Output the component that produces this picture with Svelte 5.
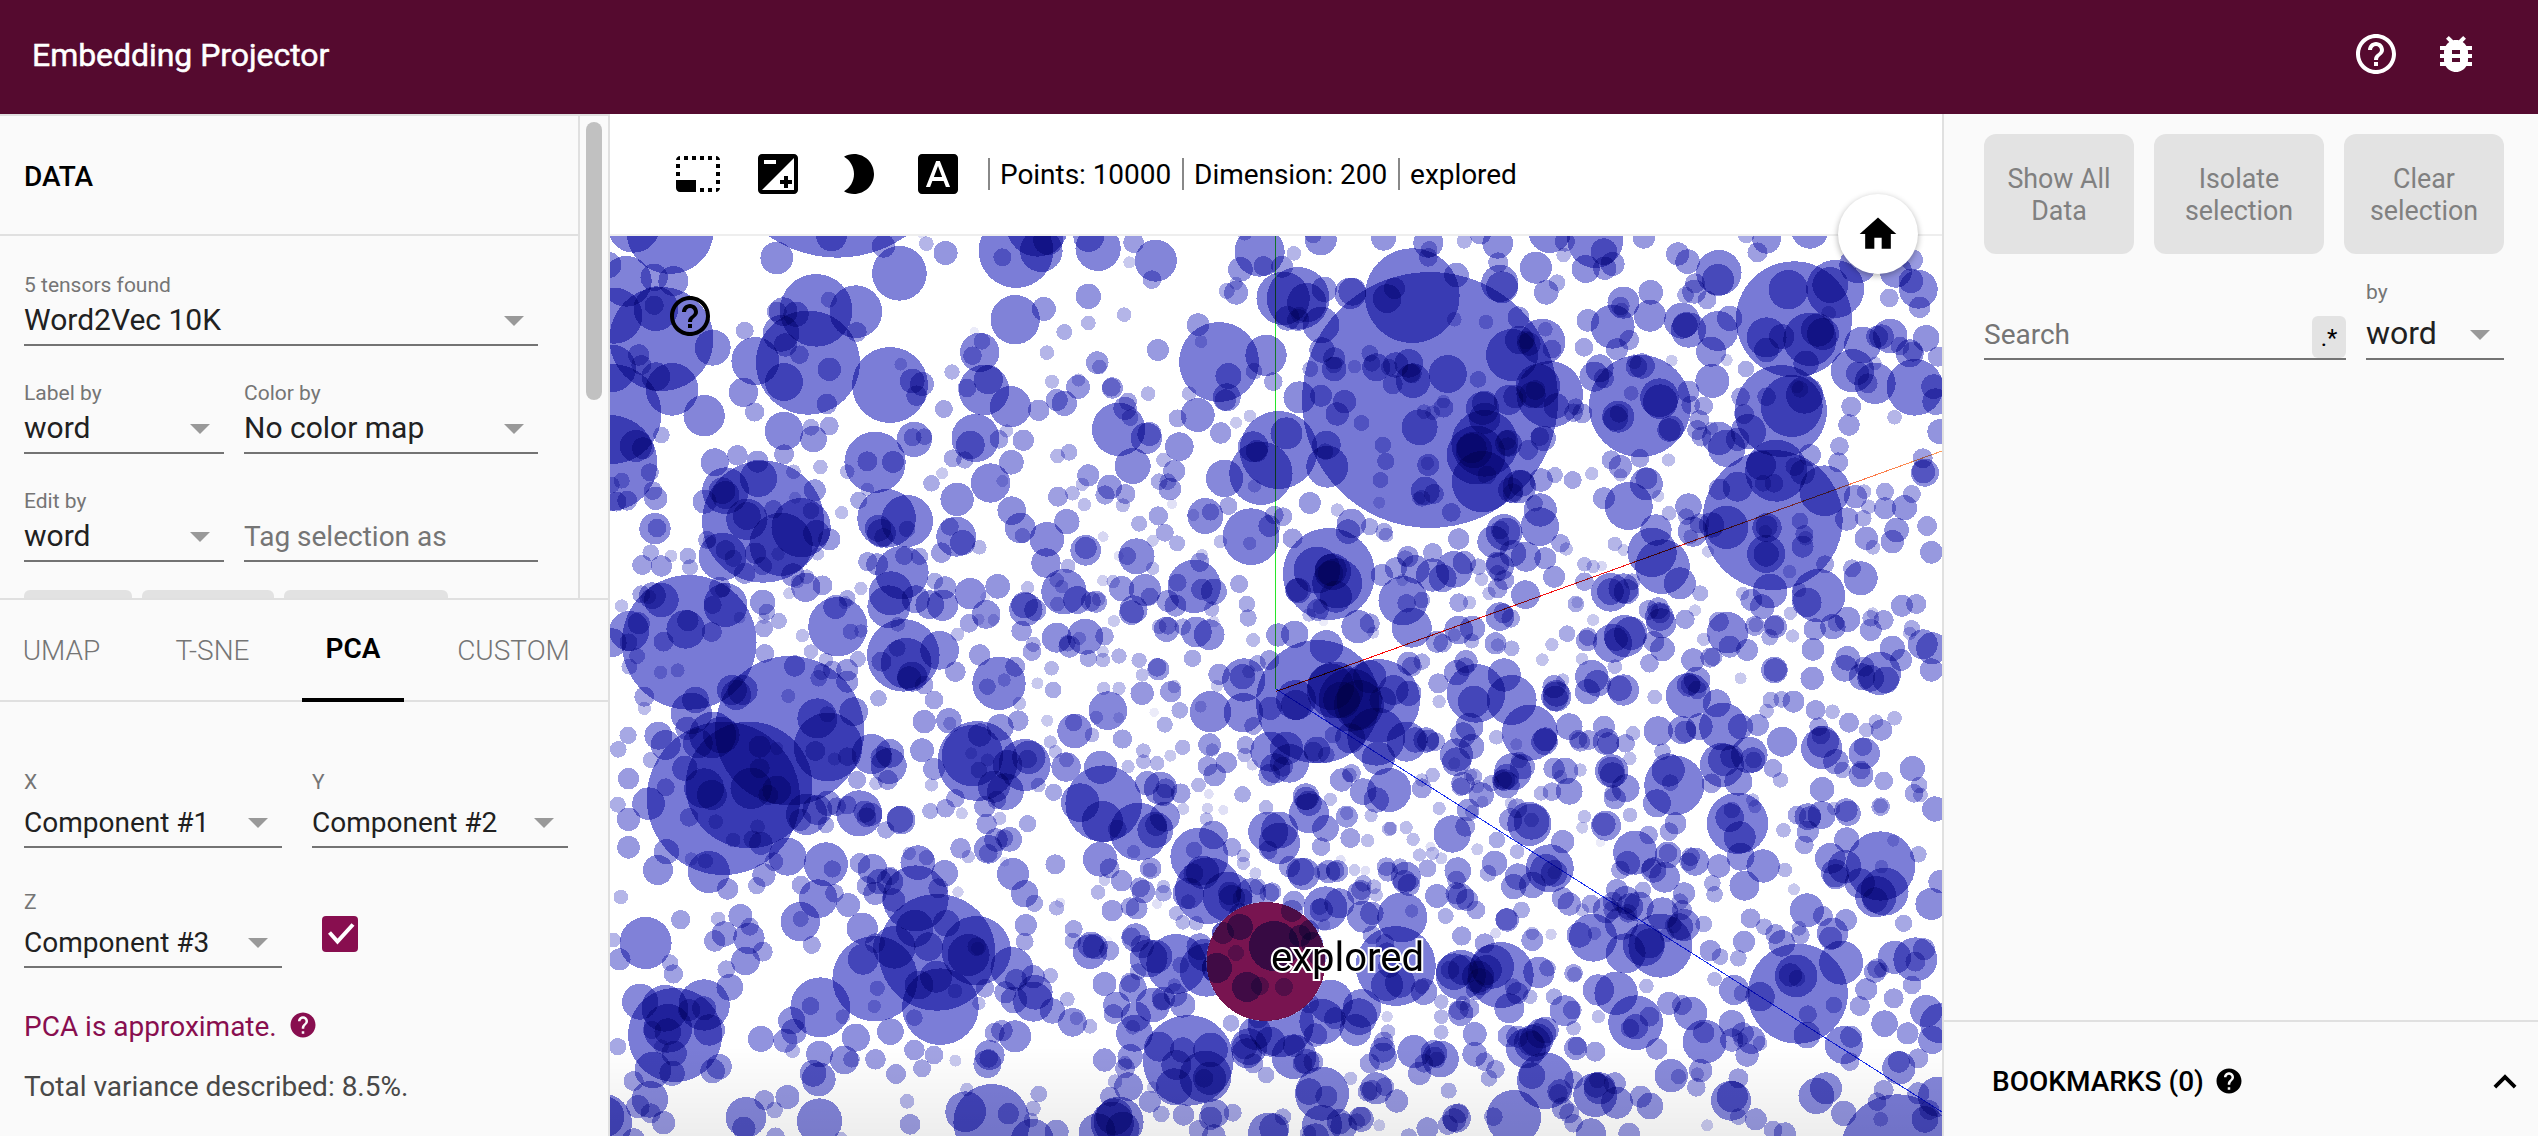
<script>
  // Projected points, grouped by scene quadrant. Each entry is "x y size" in quadrant units.
  const quadrants = [
    {
      x: 608, y: 230, kx: 0.4273,
      data: `145 1 131,60 -10 78,537 -278 361,395 84 49,523 18 46,645 48 35,682 130 82,745 41 22,735 10 15,790 69 36,955 62 112,1005 -13 93,1014 62 64,923 82 27,1030 30 45,1147 55 68,1125 20 46,1220 97 18,1230 38 31,1282 92 63,1273 149 28,1525 65 75,1534 108 30,1480 118 37,1470 188 36,1448 183 24,1470 160 20,1490 10 22,0 105 40,43 154 76,108 142 41,153 153 45,112 236 67,15 257 84,108 226 29,125 327 156,245 353 54,320 302 27,72 375 32,78 405 30,10 415 71,112 440 43,150 478 79,225 557 62,8 552 150,3 699 144,65 648 48,82 655 33,125 615 25,98 727 27,32 752 24,8 765 25,112 805 35,20 815 30,45 812 30,105 782 28,110 896 47,115 894 28,100 968 25,148 978 19,187 978 25,80 1005 30,125 1008 32,192 1012 24,
487 241 109,517 209 24,580 245 79,582 306 30,410 245 43,395 245 30,440 253 38,468 398 156,345 393 72,405 310 55,415 345 35,448 374 28,518 418 35,412 456 57,512 522 31,317 487 44,343 546 29,660 465 114,685 403 19,712 453 37,735 462 36,722 497 31,805 426 23,786 537 27,412 603 58,475 592 25,518 588 28,481 627 40,625 697 92,607 694 30,667 696 33,717 628 53,713 622 27,740 620 25,870 367 59,857 305 14,875 334 25,853 377 28,880 480 76,890 449 44,840 474 28,942 530 62,953 269 74,1020 237 36,1124 199 38,1208 254 22,1124 279 22,1068 306 24,1027 368 22,1287 360 33,1145 398 34,1150 411 22,1100 471 36,1101 450 20,1039 455 21,1180 474 32,1178 472 28,1264 491 22,1050 510 33,1068 520 38,1008 541 32,1217 515 27,1210 535 35,1222 563 25,1195 598 80,1260 625 47,1267 612 36,1228 708 54,1337 650 43,1381 284 34,1430 396 120,1388 335 19,1540 376 62,1452 438 39,1512 424 25,1448 502 42,1445 510 32,1360 491 22,1380 555 51,1333 565 27,1434 609 32,1470 578 18,1502 558 19,1557 455 28,1580 205 80,1528 730 95,1510 650 46,1518 663 33,1443 745 56,1513 768 20,1398 858 54,1410 846 26,1370 855 18,1452 828 27,1505 920 85,1548 888 33,1502 940 20,1433 935 20,
860 624 72,848 645 43,915 628 28,933 603 20,972 631 32,944 697 37,807 685 27,835 690 26,782 730 18,757 760 25,895 759 59,923 753 18,817 808 50,560 725 22,497 711 22,587 811 26,607 778 20,547 848 20,1052 678 22,1079 667 25,1124 736 33,1110 763 20,1300 690 22,1325 723 33,1290 755 25,1310 755 25,1315 777 34,1174 771 37,1163 795 29,1211 792 30,1087 790 22,1053 800 30,1115 824 20,1205 826 21,1320 822 15,945 842 43,1288 858 29,1243 881 24,1303 908 27,1275 932 18,1332 940 24,1074 875 38,965 894 46,970 917 23,1159 920 16,1118 961 46,1118 954 33,1027 928 52,1025 999 44,1077 1008 22,1237 979 54,1215 978 27,1195 978 15,1275 1015 20,250 697 42,303 676 31,350 695 33,412 673 30,434 725 22,484 781 33,363 875 183,352 745 56,275 782 70,275 795 42,267 782 40,325 868 62,325 858 42,387 838 28,438 803 18,452 893 89,405 943 95,475 842 25,488 910 40,518 928 33,226 815 36,268 980 72,232 930 27,237 935 20,275 960 30,293 985 26,345 970 32,362 1008 28,320 1030 32,398 972 20,433 1035 35,490 972 20,652 865 88,700 873 78,632 895 40,640 910 43,645 922 28,700 897 25,815 920 60,800 890 27,830 938 38,780 968 31,869 952 22,688 1028 80,693 978 27,729 979 26,608 995 29,630 1003 33,662 1090 66,657 1130 64,592 1075 20,720 1108 42,753 1124 43,783 1126 47,789 1073 34,765 1053 25,848 1091 47,912 1069 37,885 1153 43,868 1168 17,902 1170 18,845 1180 28,883 1100 15,982 1073 20,978 1138 50,975 1125 40,1000 1140 33,1067 1085 68,1050 1050 22,1062 1070 20,1098 1110 42,1130 1115 30,1142 1115 33,1052 1122 22,1158 1052 17,1182 1055 20,1202 1076 38,1257 1080 48,1268 1100 27,1148 1108 20,1225 1148 37,1230 1138 42,1184 1173 18,1372 1069 80,1333 1058 27,1390 1078 32,1418 1085 39,1385 997 29,1390 975 18,1310 1113 33,1328 1127 33,1413 1137 23,1477 1062 27,1495 1122 25,1498 1164 26,1418 1175 17,1510 1230 21,1307 1198 38,1310 1187 27,1290 1190 22,1377 1206 46,1407 1214 46,1345 1190 25,1050 1223 45,1117 1220 54,1162 1219 28,1075 1240 25,1080 1250 33,1103 1225 20,968 1203 31,995 1243 23,992 1265 28,1124 1285 26,1158 1290 22,1196 1278 23,1243 1291 23,1288 1318 33,1285 1312 28,1368 1285 26,1250 1335 20,1038 1315 22,1158 1265 18,1430 1333 32,1485 1340 38,1520 1300 25,1548 1290 30,1500 1325 20,
463 1072 44,465 1040 22,502 1066 30,424 1090 18,443 1055 20,362 1117 38,372 1146 25,400 1173 24,365 1165 17,365 1195 27,367 1270 28,308 1163 18,32 1128 20,538 1190 89,532 1131 36,560 1105 25,555 1118 20,568 1205 24,592 1203 20,455 1217 20,818 1213 20,190 1237 202,125 1110 52,104 1097 40,95 1100 22,78 1093 27,262 1072 32,268 1080 22,275 1125 66,245 1125 27,182 1198 58,187 1172 32,130 1235 30,243 1206 30,50 1203 60,72 1180 33,48 1237 27,10 1238 43,68 1278 24,50 1310 24,123 1327 20,163 1321 21,691 1276 109,698 1300 76,776 1261 58,677 1255 25,640 1295 30,678 1183 22,712 1340 45,813 1325 31,870 1275 32,475 1265 22,510 1290 22,585 1287 24,560 1320 33,437 1308 32,500 1325 25,525 1320 28,915 1360 80,953 1310 30,927 1350 20`
    },
    {
      x: 1270, y: 230, kx: 0.4337,
      data: `117 28 48,100 15 25,55 70 22,28 110 33,262 25 37,365 38 45,367 58 25,365 82 28,448 33 23,485 10 33,430 135 37,525 40 46,526 97 30,530 160 56,535 172 48,613 113 48,637 187 37,662 158 25,677 75 22,645 5 64,750 30 84,770 65 40,790 102 36,728 117 42,772 115 35,680 35 30,862 22 34,940 72 35,963 95 37,1035 128 68,1033 150 48,980 160 30,978 185 36,958 195 25,1008 210 28,1145 28 43,1124 67 30,1098 15 25,1245 0 56,1480 90 33,1443 125 48,1495 178 58,1478 153 37,1428 204 28,1498 232 32,1355 105 55,1208 268 174,1195 179 59,1303 177 87,1292 165 54,1288 250 22,1245 328 80,1275 312 48,1263 300 50,1145 322 60,1180 320 38,1145 360 37,1236 400 38,1060 265 38,328 197 142,287 175 32,270 206 43,185 190 47,190 185 42,125 178 38,65 205 94,85 218 59,40 265 37,65 270 33,68 255 25,118 285 55,369 510 384,425 268 22,498 276 22,573 262 33,635 298 22,628 335 69,650 357 28,558 375 78,575 330 43,597 342 35,590 330 28,645 493 100,618 468 66,612 480 30,605 495 40,660 528 38,120 360 38,148 385 33,148 417 37,147 405 25,230 370 25,235 400 25,245 412 42,195 410 20,290 405 38,275 412 25,320 400 43,325 430 28,330 452 52,327 430 30,283 463 30,93 417 24,410 432 57,480 448 25,400 515 20,400 533 30,68 502 48,118 497 33,172 515 35,155 552 35,211 579 24,260 645 25,267 694 26,255 750 24,252 818 18,345 592 54,355 545 22,375 548 22,365 705 33,363 700 20,358 783 43,378 792 30,350 805 25,343 805 20,418 847 28,130 645 43,132 710 63,127 665 25,20 660 117,38 610 48,
490 535 50,495 565 47,495 520 38,495 640 100,470 660 55,465 655 45,490 755 92,475 675 88,550 640 40,545 630 30,548 650 28,595 660 30,565 500 35,550 510 45,630 625 38,622 620 28,500 735 28,575 770 50,580 760 40,555 780 38,625 750 35,560 790 30,700 548 28,720 550 30,705 530 25,733 271 34,724 352 28,790 290 66,815 218 48,810 240 22,878 187 37,876 257 48,808 228 28,828 330 30,800 358 33,760 415 42,748 440 45,770 445 30,853 528 153,845 410 32,858 408 38,840 395 22,898 503 58,900 515 52,833 490 22,803 560 48,797 565 37,805 550 28,925 595 38,920 600 35,965 485 33,970 525 28,1000 528 28,853 685 28,787 690 29,919 690 20,742 731 20,698 750 27,657 735 24,808 710 35,808 735 20,950 272 54,965 300 53,957 285 38,1033 303 60,1017 365 45,1020 453 51,1053 390 18,926 392 18,1097 417 25,1178 543 138,1203 528 93,1233 495 56,1145 500 28,1222 478 25,1215 470 20,1085 500 28,1103 605 53,1093 552 30,1159 870 210,1167 722 93,1132 705 45,1228 727 37,1210 710 28,1279 782 76,1162 760 28,1137 760 25,1078 770 45,1036 778 32,1053 892 65,1018 885 38,1146 893 44,1142 905 20,1144 972 57,1144 972 38,1145 890 33,1222 873 25,1232 912 27,1228 950 33,1235 925 22,1198 1025 20,1280 1003 27,1153 1083 52,1265 1097 80,1238 1117 44,1220 1080 22,1362 1045 51,1342 1015 27,1110 1110 33,1135 1130 37,1090 1090 20,1053 655 56,1035 625 50,1078 628 35,1313 649 28,1310 697 30,1245 675 33,1335 585 32,1340 530 30,1440 562 22,1487 472 85,1395 460 62,1378 460 30,1343 422 65,1355 430 35,1366 345 55,1410 320 37,1430 318 52,1400 320 33,1395 400 20,1513 325 40,1475 370 42,1482 365 30,1453 348 28,1530 470 37,1535 515 40,1540 380 30,1545 605 38,1510 728 42,1507 725 35,1505 685 30,1418 785 27,1480 792 27,1463 833 38,1445 900 37,1418 835 33,1435 935 35,1375 925 35,1390 952 22,1525 967 34,1515 888 30,1330 867 35,1350 800 35,1370 785 22,1368 865 25,1380 830 22,990 570 30,985 600 30,995 620 30,1018 595 20,
827 828 72,770 805 33,868 762 49,868 745 33,895 798 18,920 850 22,890 900 47,881 967 74,905 1010 82,945 1060 48,965 830 40,960 860 25,975 905 45,990 880 30,970 920 22,1010 965 18,795 942 22,815 960 18,725 1003 22,765 1008 16,745 1010 20,725 1055 28,785 1087 58,785 1085 40,815 1075 45,822 1085 38,835 1055 25,705 1122 25,708 1118 17,655 1040 33,92 819 33,155 840 20,188 880 44,180 905 37,230 890 26,263 905 26,268 915 22,30 860 28,10 855 28,52 925 30,136 1032 138,108 1020 70,145 1025 55,140 1020 48,140 1030 38,155 1060 75,152 1100 48,65 1082 38,62 1080 35,110 1140 33,90 1155 20,115 1130 22,123 1175 14,435 927 32,375 968 29,318 980 32,312 985 24,335 1018 43,290 1015 33,258 1035 33,305 1050 18,307 1112 74,315 1120 28,350 1110 25,327 1193 60,425 1018 55,448 998 35,398 1045 42,375 1035 50,435 1118 28,460 1118 20,515 935 48,540 907 55,545 905 42,530 900 28,623 840 50,622 890 58,610 820 25,590 980 45,530 1010 42,525 1000 35,525 1030 25,560 970 40,635 985 33,670 940 28,683 957 20,480 1010 25,488 1048 20,540 1050 30,525 1075 30,505 1090 20,589 1094 43,530 1160 43,538 1150 30,57 1213 41,18 1215 35,203 1190 50,230 1180 30,238 1208 18,130 1250 50,385 1235 33,398 1240 28,435 1200 43,467 1195 38,465 1233 23,425 1215 20,520 1240 33,525 1245 20,557 1255 24,555 1165 28,628 1289 19,650 1244 20,685 1211 25,720 1287 19,730 1232 32,733 1220 28,818 1218 63,798 1228 35,832 1210 50,790 1240 58,745 1170 18,898 1160 43,900 1150 30,895 1135 33,873 1140 30,902 1180 45,885 1235 32,905 1257 37,957 1168 29,980 1141 18,992 1090 24,875 1300 28,742 1340 50,795 1310 22,540 1335 50,452 1295 35,450 1310 28,430 1328 38,320 1300 35,327 1310 30,350 1295 25,230 1340 50,1055 1208 62,1035 1175 30,1060 1250 33,1100 1260 33,1015 1283 30,1022 1280 28,975 1290 35,1000 1228 20,1165 1190 35,1163 1187 30,1118 1188 30,1120 1185 22,1152 1222 25,1205 1218 20,1200 1150 20,1256 1198 33,1298 1190 38,1305 1180 25,1332 1168 38,1252 1258 34,1250 1345 35,1163 1320 40,1165 1320 35,1385 1200 33,1390 1150 18,1385 1165 25,1415 1170 30,1457 1127 33,1490 1122 30,1505 1243 45,1527 1255 48,1475 1210 20,1435 1255 38,1480 1195 25,1332 1285 37,1325 1315 40,1405 1330 65,1385 1345 40,1370 1310 30,1365 1340 40,1420 1350 40,1455 1290 33,1525 1320 35,985 1350 40,965 1365 35,1085 1345 18,675 1350 20`
    },
    {
      x: 608, y: 680, kx: 0.4273,
      data: `425 152 224,270 355 230,330 315 190,225 325 60,243 345 45,335 325 62,245 165 70,265 165 55,195 100 62,185 145 35,205 60 40,180 265 38,210 190 45,118 167 42,135 195 45,85 50 30,85 85 20,47 166 26,24 208 25,100 240 24,48 296 32,95 371 49,23 374 24,48 418 35,48 502 34,135 322 27,190 412 28,252 425 22,293 480 22,338 478 27,350 440 22,358 490 35,137 515 38,117 570 45,236 576 63,195 537 20,228 543 23,280 627 32,30 651 22,420 530 57,365 585 35,388 545 28,348 617 26,490 115 60,515 201 103,513 103 24,485 213 30,530 237 20,560 230 28,575 95 43,422 48 21,300 45 45,315 30 45,290 30 45,493 -5 25,560 5 33,355 200 33,395 205 20,395 330 43,375 345 30,355 265 30,633 55 25,617 222 60,657 258 54,660 220 43,640 232 33,583 300 27,627 310 20,655 300 30,465 403 62,490 390 45,515 370 38,510 435 25,535 380 28,450 420 33,588 400 69,560 375 28,600 395 33,615 403 35,605 412 30,686 420 43,683 418 40,650 450 26,740 125 35,798 122 38,735 211 36,763 267 33,757 315 20,705 -5 36,740 15 28,763 60 28,888 20 25,963 70 20,960 122 31,918 142 40,865 243 120,853 227 92,870 165 35,800 130 20,935 255 45,975 255 78,985 232 50,982 237 28,930 335 55,903 320 48,868 270 25,850 220 18,888 240 20,813 355 28,790 385 28,754 393 24,828 400 18,882 380 32,910 360 28,886 432 31,917 415 20,982 431 26,
1028 122 18,1092 153 52,1090 128 26,1133 165 22,1035 186 20,1170 92 58,1143 112 20,1195 113 16,1204 177 29,1160 25 20,1196 25 20,1042 30 25,1005 10 18,1250 40 35,1317 35 32,1325 20 20,1278 97 14,1303 134 24,1338 91 25,1410 95 62,1387 80 18,1425 18 18,1488 0 65,1487 98 59,1550 85 35,1510 138 27,1253 212 22,1217 260 20,1316 227 18,1345 202 23,1408 194 34,1414 210 20,1492 195 27,1490 225 22,1447 248 32,1403 258 30,1420 285 34,1508 255 17,1550 215 60,1548 285 33,1072 261 44,1073 240 22,1153 262 50,1160 371 115,1105 368 58,1047 215 20,1157 425 62,1242 455 87,1230 515 20,1262 310 37,1293 325 50,1305 325 30,1340 340 30,1300 345 33,1283 435 33,1281 450 54,1192 447 28,1303 410 45,1253 245 22,1285 250 22,1043 337 26,1007 315 22,1382 315 22,1406 342 15,1346 387 18,1403 385 17,1440 390 15,1485 343 25,1400 417 20,1540 382 22,1152 538 52,1174 565 30,1202 602 32,1384 530 87,1372 510 25,1417 465 43,1460 502 28,1487 527 20,1487 550 20,1405 632 100,1392 577 50,1370 580 30,1358 640 47,1358 665 22,1450 650 75,1455 640 35,1485 655 30,1460 655 40,1480 705 35,1515 580 18,1520 620 25,1505 640 45,1548 640 30,1545 455 60,1545 510 28,
825 505 31,843 530 20,890 508 43,908 480 35,940 478 37,927 475 27,890 520 28,948 582 48,928 545 15,1047 553 30,975 641 41,998 670 26,1050 684 23,1058 668 15,1147 637 22,510 553 66,525 567 26,492 656 58,452 615 28,530 640 28,562 675 36,590 550 31,619 567 45,605 618 30,625 640 35,635 605 38,660 588 28,725 548 52,745 533 23,705 520 20,788 580 40,720 655 99,773 625 30,668 660 35,660 605 40,819 636 17,595 745 47,450 725 59,451 717 24,477 795 27,770 817 175,718 745 56,792 730 40,625 896 128,597 838 46,625 790 30,670 802 64,750 800 43,862 812 104,844 825 63,865 805 20,863 800 28,728 915 43,778 980 115,768 890 48,812 933 22,717 1013 25,497 982 90,474 978 27,630 925 23,623 979 20,580 1073 42,550 1010 22,661 1055 40,945 865 64,975 785 27,978 735 33,995 890 35,955 900 33,1000 937 52,995 965 60,930 937 33,950 960 40,1035 887 23,1075 958 22,1040 993 38,1087 1027 43,1096 1015 20,1128 1039 22,882 925 28,868 970 20,953 1069 48,922 1052 32,905 1058 30,893 1125 45,891 1135 28,888 1152 42,88 789 78,27 838 33,13 780 22,145 848 25,153 882 29,170 719 29,258 717 22,310 708 36,272 762 38,250 783 32,330 775 47,332 740 27,322 843 43,362 815 30,277 868 27,285 922 40,75 965 54,157 1065 141,225 975 77,133 985 70,140 1045 73,140 1055 40,103 1050 27,190 990 33,225 985 36,237 1050 47,125 1100 22,155 1120 38,105 1170 55,150 1180 38,23 1100 26,358 1077 39,430 1022 41,435 1055 38,415 1082 36,432 1112 22,495 1122 40,480 1180 40,493 1198 51,553 1140 43,570 1138 25,626 1138 31,717 1110 31,763 1125 28,813 1142 18,735 1165 27,674 1182 30,260 1160 38,245 1173 37,60 1203 30,98 1258 55,70 1280 35,100 1300 30,130 1328 35,-10 1310 62,-14 1330 90,60 1380 35,323 1312 61,318 1345 35,366 1260 30,390 1290 25,420 1251 36,495 1323 68,392 1370 28,545 1375 20,700 1264 22,707 1333 31,898 1327 115,837 1295 61,937 1301 32,840 1228 20,1008 1242 25,995 1285 23,993 1380 64,1050 1355 36,990 1320 22,
1162 912 36,1190 975 40,1222 908 30,1235 773 43,1225 770 28,1250 800 35,1265 835 57,1330 852 90,1282 830 50,1385 800 40,1395 825 48,1400 870 80,1340 855 25,1240 875 25,1275 975 52,1228 925 42,1235 1010 45,1232 1060 55,1228 1042 22,1295 965 27,1300 955 35,1328 945 35,1345 975 38,1325 915 20,1358 1141 136,1290 1100 45,1345 1110 38,1410 1110 52,1330 1155 45,1398 1190 78,1408 1195 50,1395 1195 28,1325 1220 55,1183 1002 30,1162 1140 35,1222 1130 38,1210 1165 30,1210 1150 22,1218 1220 43,1187 1205 22,1175 1250 30,1195 1325 75,1185 1310 55,1205 1345 50,1180 1330 65,1145 1355 55,1268 1265 33,1295 1302 25,1275 1222 18,1347 1305 32,1410 1315 35,1420 1300 43,1462 1298 27,1418 1368 35,1382 1350 30,1545 1358 60,1540 1185 25,1510 1150 30,1495 1120 45,1500 1100 55,1490 1100 38,1550 1085 45,1522 1015 30,1458 1030 25,1515 1060 50,1090 747 27,1088 783 25,1128 815 52,1140 800 38,1130 795 40,1170 780 12,1173 812 30,1180 692 32,1237 685 33,1222 680 28,1245 622 30,1253 635 35,1270 565 32,1268 570 22,1300 640 25,1285 672 15,1330 700 22,1345 727 22,1377 730 22,1162 600 18,1300 620 20,1559 800 76,1495 920 44,1425 865 45,1470 820 22,1525 765 20,1480 740 38,1440 760 35,1525 918 25`
    },
    {
      x: 1270, y: 680, kx: 0.4337,
      data: `110 65 185,250 62 125,150 30 85,185 60 95,205 75 75,140 20 70,165 60 55,245 170 87,315 185 60,260 60 40,285 30 45,320 40 38,390 65 20,388 10 30,60 75 45,60 60 60,108 210 40,100 215 30,130 225 25,145 165 25,185 175 45,38 205 50,45 250 58,30 260 30,12 265 45,475 40 88,470 65 48,557 60 75,599 158 84,635 178 36,568 193 18,633 185 40,660 50 45,660 40 40,658 55 38,655 20 35,690 140 40,710 178 28,715 185 30,735 180 30,770 140 33,775 185 40,780 190 33,820 190 28,837 160 22,732 35 38,755 10 40,815 30 47,805 25 38,887 51 22,522 172 22,445 165 38,460 140 42,430 225 50,430 245 43,425 250 18,465 200 38,360 180 38,365 182 33,382 185 28,335 180 38,275 330 66,245 360 38,215 335 40,250 235 50,165 300 35,183 285 22,188 280 28,350 325 30,350 300 20,375 285 22,83 350 40,90 370 38,90 400 60,83 355 35,128 445 40,139 358 20,177 410 33,177 400 20,233 407 20,185 474 30,225 482 20,118 500 28,22 450 55,22 490 62,78 582 48,70 575 42,45 560 32,120 575 25,135 575 35,150 572 28,155 573 33,275 447 22,278 445 20,314 443 20,330 478 20,390 385 20,445 310 35,440 320 28,470 290 25,462 285 20,420 462 56,450 440 30,457 390 34,465 395 20,487 345 38,490 365 18,478 320 20,510 310 25,560 275 56,545 290 38,540 300 33,545 315 40,535 300 30,575 240 25,582 260 38,625 340 22,655 265 32,680 273 40,690 334 40,650 335 28,670 290 20,715 270 20,788 273 50,787 270 40,790 285 38,820 325 42,795 355 33,790 340 25,830 235 20,932 316 90,918 270 50,923 308 25,892 370 42,905 215 25,895 153 44,950 150 42,958 155 33,990 140 40,965 47 68,985 30 28,970 15 30,1045 140 72,1030 70 42,1125 135 33,1085 140 38,1042 255 66,1047 240 48,1065 230 35,1105 225 55,1113 240 38,1115 240 25,1145 93 22,1155 60 25,1180 58 25,1207 65 33,1181 185 45,1258 90 30,1297 95 22,1160 265 28,1177 300 23,1080 305 42,1018 310 30,1078 430 92,1060 413 43,1065 390 25,1083 472 48,1118 380 20,1113 360 20,1272 205 62,1275 185 48,1270 165 28,1265 140 28,1335 128 30,1375 150 22,1410 150 32,1397 125 22,1440 115 22,1370 220 47,1367 200 28,1363 285 37,1363 270 28,1305 245 38,1320 270 25,1415 303 28,1481 266 38,1273 328 37,1497 315 25,1485 340 28,1500 345 22,1533 387 38,1408 380 28,1408 378 22,1333 400 38,1240 410 40,1245 412 33,1272 405 42,1215 405 28,1328 390 35,1300 385 20,1240 455 33,1232 495 28,1184 451 22,1330 480 38,
830 405 22,725 410 20,720 443 18,775 437 45,770 433 35,873 465 28,935 430 33,920 455 28,762 487 14,675 485 35,598 432 66,603 425 54,603 420 22,523 480 25,570 385 30,555 420 35,518 550 38,478 508 18,503 580 25,572 590 40,562 620 38,645 565 72,637 570 48,655 580 40,655 578 20,605 615 40,570 515 22,555 370 18,842 518 66,825 550 37,808 570 28,885 570 38,880 565 30,918 525 40,918 520 28,970 530 28,980 545 42,965 545 28,910 592 46,1035 558 35,1085 530 42,1094 617 45,1137 558 50,1187 570 22,1208 628 18,1020 610 25,1025 643 25,1292 535 46,1408 558 104,1437 482 18,1495 523 25,1410 560 20,1417 635 72,1397 650 62,1395 660 38,1305 590 38,1303 580 42,1325 560 50,1360 610 45,1525 672 48,1545 605 35,1238 691 51,1275 708 30,1297 760 47,1293 775 35,1328 720 33,1220 745 22,1223 765 28,1461 730 26,1108 715 30,1140 740 25,1180 790 40,1165 762 30,1093 785 33,1217 941 150,1213 888 64,1200 885 35,1215 895 25,1317 848 66,1300 975 25,1240 1003 27,1130 950 44,1070 930 45,1238 1065 40,1088 940 25,1440 832 50,1488 838 66,1508 808 33,1488 845 30,1400 865 30,1410 870 22,1395 875 33,1375 928 33,1438 955 30,1360 978 30,1417 1031 40,1480 915 28,1513 993 48,1545 1030 60,1527 1080 42,1470 1060 33,1495 1135 30,1323 1095 57,1340 1070 33,1337 1145 28,1450 1164 50,1450 1145 33,1282 1225 48,1260 1248 54,1323 1300 38,1447 1413 170,1408 1318 22,1415 1230 30,1400 1265 28,1495 1240 33,1510 1318 40,1520 1290 30,1540 1250 60,1187 1360 33,1120 1318 33,1160 1350 28,1066 1250 47,1063 1262 60,1080 1195 30,1080 1310 25,983 1222 28,993 1172 35,985 1182 20,925 1187 50,942 1190 23,1008 1336 18,1002 1085 66,1000 1058 32,1065 1030 40,1065 1080 35,1110 1080 42,1100 1125 35,1090 1060 33,1085 1080 22,1130 1090 22,920 970 35,950 975 30,970 1000 50,843 1028 82,843 1040 38,830 1045 28,875 1010 30,892 1107 32,750 1115 30,705 1105 35,708 1098 28,798 940 65,757 930 47,868 918 22,655 950 25,680 992 46,697 990 28,757 1010 20,700 1045 22,745 773 72,713 765 38,790 690 28,748 760 20,900 797 96,862 795 63,875 790 45,915 765 22,820 820 60,955 735 48,945 740 40,930 735 25,1000 732 25,1015 812 32,1038 830 25,1080 835 25,1025 898 22,905 700 48,850 680 45,820 660 42,830 680 40,810 730 50,825 700 28,800 630 33,790 665 30,740 672 28,860 630 25,955 640 33,945 665 25,950 690 30,775 690 40,690 672 35,675 655 33,720 690 20,547 720 35,545 718 33,580 690 25,605 780 33,605 760 20,648 763 17,520 760 16,
405 708 24,442 768 29,495 790 30,433 572 40,430 600 28,440 650 40,455 660 33,430 640 33,475 690 28,385 648 36,363 565 27,345 525 20,375 520 20,370 500 15,395 535 18,313 590 45,320 615 33,310 605 35,272 575 30,268 560 28,300 560 25,205 640 35,215 610 25,210 630 30,240 620 22,245 645 20,195 570 18,220 572 15,163 540 15,128 685 66,160 670 45,118 690 35,115 680 25,125 735 18,215 710 48,235 700 35,305 712 75,327 693 20,290 858 120,275 860 33,270 815 28,300 908 45,270 915 48,355 935 40,350 920 22,235 765 28,265 790 28,440 885 75,425 875 55,445 870 45,415 870 28,532 885 99,512 860 66,480 890 48,500 870 45,485 905 40,475 930 30,620 877 47,640 865 25,570 940 33,560 920 25,552 985 45,600 950 22,440 1000 38,435 990 30,460 985 30,445 970 22,395 1010 22,395 965 22,270 1010 17,272 1055 22,395 1057 22,472 1062 36,472 1123 37,550 1068 33,495 1145 28,520 1168 28,505 1195 25,700 880 28,702 883 22,605 1090 55,602 1090 38,625 1060 45,615 1080 50,590 1105 60,635 1050 40,570 1070 33,635 1202 85,604 1187 40,668 1235 37,665 1240 28,675 1285 33,700 1200 28,750 1245 66,752 1215 38,760 1225 48,755 1200 25,800 1268 48,795 1210 33,855 1250 33,876 1278 40,690 1300 30,700 1330 28,740 1360 45,828 1360 32,562 1312 82,515 1310 28,332 1115 50,393 1137 55,380 1130 30,378 1120 40,385 1140 25,345 1180 35,355 1150 28,260 1130 42,260 1110 38,262 1085 30,230 1150 30,245 1225 48,235 1230 30,265 1220 28,225 1235 30,292 1263 35,186 1195 20,412 1232 24,120 1241 81,90 1235 40,130 1250 33,120 1335 60,160 1325 38,170 1340 40,210 1318 38,210 1310 30,200 1325 25,252 1336 18,30 1310 25,430 1315 43,425 1320 35,435 1300 30,410 1335 30,363 1345 33,320 1370 25,88 1360 25,105 1370 40,10 1345 45,55 1130 67,55 1098 33,25 1032 99,120 1025 68,150 1015 33,140 965 66,212 985 58,205 1010 55,197 1050 48,85 1145 38,75 1150 30,100 1145 30,105 1065 35,30 925 22,85 770 20,68 800 22,5 635 28,55 665 33,90 970 30`
    }
  ];

  // Small points recede into the white fog.
  function tint(size) {
    const t = Math.max(0.08, 1 - Math.pow(12.5 / size, 1.4));
    return `rgb(${Math.round(255 - 138 * t)},${Math.round(255 - 136 * t)},${Math.round(255 - 42 * t)})`;
  }

  const points = quadrants.flatMap((q) =>
    q.data.split(',').map((entry) => {
      const [x, y, s] = entry.trim().split(' ').map(Number);
      return { x: q.x + x * q.kx, y: q.y + y / 3, r: s / 3, fill: tint(s) };
    })
  );

  const icons = {
    help: 'M11 18h2v-2h-2v2zm1-16C6.48 2 2 6.48 2 12s4.48 10 10 10 10-4.48 10-10S17.52 2 12 2zm0 18c-4.41 0-8-3.59-8-8s3.59-8 8-8 8 3.59 8 8-3.59 8-8 8zm0-14c-2.21 0-4 1.79-4 4h2c0-1.1.9-2 2-2s2 .9 2 2c0 2-3 1.75-3 5h2c0-2.25 3-2.5 3-5 0-2.21-1.79-4-4-4z',
    helpFilled: 'M12 2C6.48 2 2 6.48 2 12s4.48 10 10 10 10-4.48 10-10S17.52 2 12 2zm1 17h-2v-2h2v2zm2.07-7.75l-.9.92C13.45 12.9 13 13.5 13 15h-2v-.5c0-1.1.45-2.1 1.17-2.83l1.24-1.26c.37-.36.59-.86.59-1.41 0-1.1-.9-2-2-2s-2 .9-2 2H8c0-2.21 1.79-4 4-4s4 1.79 4 4c0 .88-.36 1.68-.93 2.25z',
    bug: 'M20 8h-2.81c-.45-.78-1.07-1.45-1.82-1.96L17 4.41 15.59 3l-2.17 2.17C12.96 5.06 12.49 5 12 5c-.49 0-.96.06-1.41.17L8.41 3 7 4.41l1.62 1.63C7.88 6.55 7.26 7.22 6.81 8H4v2h2.09c-.05.33-.09.66-.09 1v1H4v2h2v1c0 .34.04.67.09 1H4v2h2.81c1.04 1.79 2.97 3 5.19 3s4.15-1.21 5.19-3H20v-2h-2.09c.05-.33.09-.66.09-1v-1h2v-2h-2v-1c0-.34-.04-.67-.09-1H20V8zm-6 8h-4v-2h4v2zm0-4h-4v-2h4v2z',
    select: 'M23 15h-2v2h2v-2zm0-4h-2v2h2v-2zm0 8h-2v2c1 0 2-1 2-2zM15 3h-2v2h2V3zm8 4h-2v2h2V7zm-2-4v2h2c0-1-1-2-2-2zM3 21h8v-6H1v4c0 1.1.9 2 2 2zM3 7H1v2h2V7zm12 12h-2v2h2v-2zm4-16h-2v2h2V3zm0 16h-2v2h2v-2zM3 3C2 3 1 4 1 5h2V3zm0 8H1v2h2v-2zm8-8H9v2h2V3zM7 3H5v2h2V3z',
    exposure: 'M15 17v2h2v-2h2v-2h-2v-2h-2v2h-2v2h2zm5-15H4c-1.1 0-2 .9-2 2v16c0 1.1.9 2 2 2h16c1.1 0 2-.9 2-2V4c0-1.1-.9-2-2-2zM5 5h6v2H5V5zm15 15H4L20 4v16z',
    night: 'M10 2c-1.82 0-3.53.5-5 1.35C7.99 5.08 10 8.3 10 12s-2.01 6.92-5 8.65C6.47 21.5 8.18 22 10 22c5.52 0 10-4.48 10-10S15.52 2 10 2z',
    labels: 'M9.93 13.5h4.14L12 7.98zM20 2H4c-1.1 0-2 .9-2 2v16c0 1.1.9 2 2 2h16c1.1 0 2-.9 2-2V4c0-1.1-.9-2-2-2zm-4.05 16.5l-1.14-3H9.17l-1.12 3H5.96l5.11-13h1.86l5.11 13h-2.09z',
    home: 'M10 20v-6h4v6h5v-8h3L12 3 2 12h3v8z',
    less: 'M12 8l-6 6 1.41 1.41L12 10.83l4.59 4.58L18 14z'
  };
</script>

{#snippet icon(name, size)}
  <svg class="icon" width={size} height={size} viewBox="0 0 24 24"><path d={icons[name]} /></svg>
{/snippet}

{#snippet field(label, value)}
  <div class="field">
    <span class="label">{label}</span>
    <span class="value"><span class="text">{value}</span><i class="arrow"></i></span>
  </div>
{/snippet}

<div class="app">
  <header>
    <h1>Embedding Projector</h1>
    <nav>{@render icon('help', 48)}{@render icon('bug', 48)}</nav>
  </header>

  <div class="body">
    <aside class="left">
      <div class="scroller">
        <div class="data">
          <h2>DATA</h2>
          <div class="form">
            {@render field('5 tensors found', 'Word2Vec 10K')}
            <div class="pair">{@render field('Label by', 'word')}{@render field('Color by', 'No color map')}</div>
            <div class="pair">
              {@render field('Edit by', 'word')}
              <div class="field"><span class="label"></span><span class="value hint">Tag selection as</span></div>
            </div>
            <div class="stubs"><i class="s1"></i><i class="s2"></i><i class="s3"></i></div>
          </div>
        </div>
        <div class="track"><div class="thumb"></div></div>
      </div>

      <div class="tabs">
        <span>UMAP</span><span>T-SNE</span><span class="active">PCA</span><span class="last">CUSTOM</span>
      </div>
      <div class="pca">
        <div class="axes">
          {@render field('X', 'Component #1')}
          {@render field('Y', 'Component #2')}
          {@render field('Z', 'Component #3')}
          <div class="check">
            <svg width="36" height="36" viewBox="0 0 36 36"><path d="M7.5 16.5l8 9L31 8.5" fill="none" stroke="#fff" stroke-width="4" /></svg>
          </div>
        </div>
        <p class="approx"><span>PCA is approximate.</span>{@render icon('helpFilled', 30)}</p>
        <p class="variance">Total variance described: 8.5%.</p>
      </div>
    </aside>

    <main>
      <div class="toolbar">
        {@render icon('select', 48)}{@render icon('exposure', 48)}{@render icon('night', 48)}{@render icon('labels', 48)}
        <div class="stats"><span>Points: 10000</span><span>Dimension: 200</span><span>explored</span></div>
      </div>
      <div class="scene">
        <svg width="1332" height="900" viewBox="610 236 1332 900">
          <defs>
            <linearGradient id="redAxis" gradientUnits="userSpaceOnUse" x1="1276" y1="689" x2="1942" y2="451">
              <stop offset="0" stop-color="#f00" /><stop offset="0.6" stop-color="#f01818" /><stop offset="1" stop-color="#ff9c5a" />
            </linearGradient>
          </defs>
          <g class="points">
            {#each points as p}<circle cx={p.x} cy={p.y} r={p.r} fill={p.fill} />{/each}
          </g>
          <circle class="mask" cx="1266" cy="961.5" r="59.5" />
          <g class="points inner">
            <circle cx="1266" cy="961.5" r="59.5" fill="#781450" />
            <circle cx="1274" cy="946" r="25" fill="#7577d5" />
            <circle cx="1247" cy="987" r="15" fill="#8888dc" />
            <circle cx="1217" cy="968" r="15" fill="#8888dc" />
            <circle cx="1236" cy="953" r="8" fill="#b8b8e8" />
            <circle cx="1240" cy="927" r="13" fill="#8888dc" />
            <circle cx="1223" cy="933" r="11" fill="#9d9de0" />
            <circle cx="1260" cy="986" r="9" fill="#b0b0e6" />
            <circle cx="1284" cy="987" r="9" fill="#b0b0e6" />
            <circle cx="1292" cy="911" r="11" fill="#a0a0e0" />
            <circle cx="1300" cy="936" r="11" fill="#9090dc" />
            <circle cx="1309" cy="930" r="10" fill="#9090dc" />
            <circle cx="1312" cy="943" r="11" fill="#9090dc" />
            <circle cx="1318" cy="957" r="9" fill="#a0a0e0" />
          </g>
          <g class="axes-lines">
            <path d="M1275.5 236V689" stroke="#28e628" />
            <path d="M1276 691.5L1942 451" stroke="url(#redAxis)" />
            <path d="M1276 689L1942 1112" stroke="#1830f0" />
          </g>
          <text class="tag" x="1271" y="971">explored</text>
        </svg>
        <div class="scene-help">{@render icon('help', 48)}</div>
        <div class="shade"></div>
      </div>
      <div class="home">{@render icon('home', 44)}</div>
    </main>

    <aside class="right">
      <div class="inspector">
        <div class="buttons">
          <button disabled>Show All Data</button>
          <button disabled>Isolate selection</button>
          <button disabled>Clear selection</button>
        </div>
        <div class="search">
          <div class="query"><span>Search</span><span class="regex">.*</span></div>
          <div class="by">{@render field('by', 'word')}</div>
        </div>
      </div>
      <div class="bookmarks">
        <strong>BOOKMARKS (0)</strong>{@render icon('helpFilled', 30)}
        <div class="chevron">{@render icon('less', 46)}</div>
      </div>
    </aside>
  </div>
</div>

<style>
  :global(body) { margin: 0; overflow: hidden; }
  .app, .app * { box-sizing: border-box; }
  .app { width: 2538px; height: 1136px; display: flex; flex-direction: column; background: #fff; font-family: Roboto, "Liberation Sans", sans-serif; font-size: 28px; color: #212121; }
  .icon { display: block; fill: currentColor; flex: none; }

  header { height: 114px; flex: none; background: #550a2f; color: #fff; display: flex; align-items: center; justify-content: space-between; padding: 0 58px 6px 32px; }
  h1 { margin: 0; padding-top: 1px; font-size: 32px; font-weight: 400; -webkit-text-stroke: 0.5px #fff; letter-spacing: -0.05px; }
  nav { display: flex; gap: 32px; }

  .body { flex: 1; min-height: 0; display: flex; }
  .left { width: 610px; flex: none; background: #fafafa; border-right: 2px solid #e0e0e0; border-top: 2px solid #e0e0e0; }
  .scroller { height: 484px; display: flex; overflow: hidden; border-bottom: 2px solid #e0e0e0; }
  .data { width: 580px; flex: none; border-right: 2px solid #e0e0e0; }
  h2 { margin: 0; height: 120px; padding: 3px 24px 0; line-height: 116px; font-size: 28px; font-weight: 500; color: #000; border-bottom: 2px solid #e0e0e0; }
  .form { display: flex; flex-direction: column; gap: 34px; padding: 36px 40px 0 24px; }
  .pair { display: grid; grid-template-columns: 200px 294px; gap: 20px; }
  .field { display: flex; flex-direction: column; }
  .label { height: 26px; line-height: 27px; font-size: 21px; color: #757575; }
  .value { height: 48px; line-height: 44px; display: flex; justify-content: space-between; border-bottom: 2px solid #737373; padding-right: 14px; white-space: nowrap; font-size: 30px; }
  .hint { color: #757575; font-size: 28px; line-height: 46px; }
  .arrow { width: 20px; height: 10px; margin-top: 18px; background: #999; clip-path: polygon(0 0, 100% 0, 50% 100%); }
  .stubs { display: flex; gap: 10px; margin-top: -6px; }
  .stubs i { height: 40px; border-radius: 6px; background: #e2e2e2; }
  .s1 { width: 108px; }
  .s2 { width: 132px; }
  .s3 { width: 164px; }
  .track { flex: 1; padding: 6px 6px 0; }
  .thumb { width: 16px; height: 278px; border-radius: 8px; background: #c1c1c1; }

  .tabs { height: 102px; display: grid; grid-template-columns: 123px 179px 102px 204px; border-bottom: 2px solid #e0e0e0; text-align: center; line-height: 102px; font-weight: 300; color: #757575; }
  .tabs .active { height: 102px; line-height: 97px; font-weight: 600; color: #000; border-bottom: 4px solid #000; }
  .tabs .last { padding-left: 15px; }
  .pca { padding: 66px 40px 0 24px; }
  .axes { display: grid; grid-template-columns: 258px 256px; column-gap: 30px; row-gap: 40px; }
  .axes .label { height: 30px; line-height: 28px; }
  .axes .value { height: 50px; line-height: 50px; font-size: 28px; }
  .axes .arrow { margin-top: 20px; }
  .check { width: 36px; height: 36px; margin: 28px 0 0 10px; border-radius: 4px; background: #880e4f; }
  .check svg { display: block; }
  p { margin: 0; height: 40px; line-height: 42px; white-space: nowrap; }
  .approx { margin-top: 38px; display: flex; gap: 11px; color: #880e4f; }
  .approx :global(.icon) { margin-top: 4px; }
  .variance { margin-top: 20px; color: #484848; }

  main { width: 1332px; flex: none; position: relative; }
  .toolbar { height: 122px; display: flex; align-items: center; gap: 32px; padding: 0 0 0 64px; color: #000; border-bottom: 2px solid #eee; }
  .stats { display: flex; margin-left: -6px; line-height: 34px; height: 32px; letter-spacing: -0.05px; }
  .stats span { border-left: 2px solid #888; padding: 0 11px 0 10px; }
  .scene { height: 900px; position: relative; overflow: hidden; isolation: isolate; }
  .scene svg { display: block; }
  .points circle, .axes-lines path { mix-blend-mode: multiply; shape-rendering: crispEdges; }
  .axes-lines path { stroke-width: 1; fill: none; }
  .mask { fill: #fff; }
  .tag { font-size: 40px; fill: #000; stroke: #fff; stroke-width: 4px; paint-order: stroke; }
  .scene-help { position: absolute; left: 56px; top: 56px; color: #000; }
  .shade { position: absolute; inset: auto 0 0 0; height: 90px; background: linear-gradient(rgba(0, 0, 0, 0), rgba(0, 0, 0, 0.07)); }
  .home { position: absolute; left: 1228px; top: 80px; width: 80px; height: 80px; border-radius: 50%; display: grid; place-items: center; background: #fff; color: #000; box-shadow: 0 2px 6px rgba(0, 0, 0, 0.32); }

  .right { flex: 1; background: #fafafa; border-left: 2px solid #e0e0e0; display: flex; flex-direction: column; }
  .inspector { flex: 1; padding: 20px 34px 0 40px; }
  .buttons { display: grid; grid-template-columns: 150px 170px 160px; gap: 20px; }
  button { height: 120px; border: 0; border-radius: 12px; background: #e3e3e3; color: #808080; font: 400 26.8px/32px Roboto, "Liberation Sans", sans-serif; padding: 2px 18px 0; }
  .search { display: grid; grid-template-columns: 362px 138px; gap: 20px; margin-top: 24px; align-items: end; }
  .query { height: 44px; display: flex; justify-content: space-between; border-bottom: 2px solid #737373; line-height: 38px; color: #757575; }
  .regex { width: 34px; height: 42px; border-radius: 6px; background: #e3e3e3; color: #000; text-align: center; font-size: 24px; line-height: 44px; }
  .by .label { height: 34px; line-height: 29px; }
  .by .value { font-size: 32px; line-height: 42px; }
  .bookmarks { height: 116px; display: flex; align-items: center; padding: 3px 10px 0 48px; border-top: 2px solid #e0e0e0; color: #000; }
  .bookmarks strong { font-weight: 500; margin-right: 10px; padding-top: 2px; }
  .chevron { margin-left: auto; padding-top: 2px; }
</style>
